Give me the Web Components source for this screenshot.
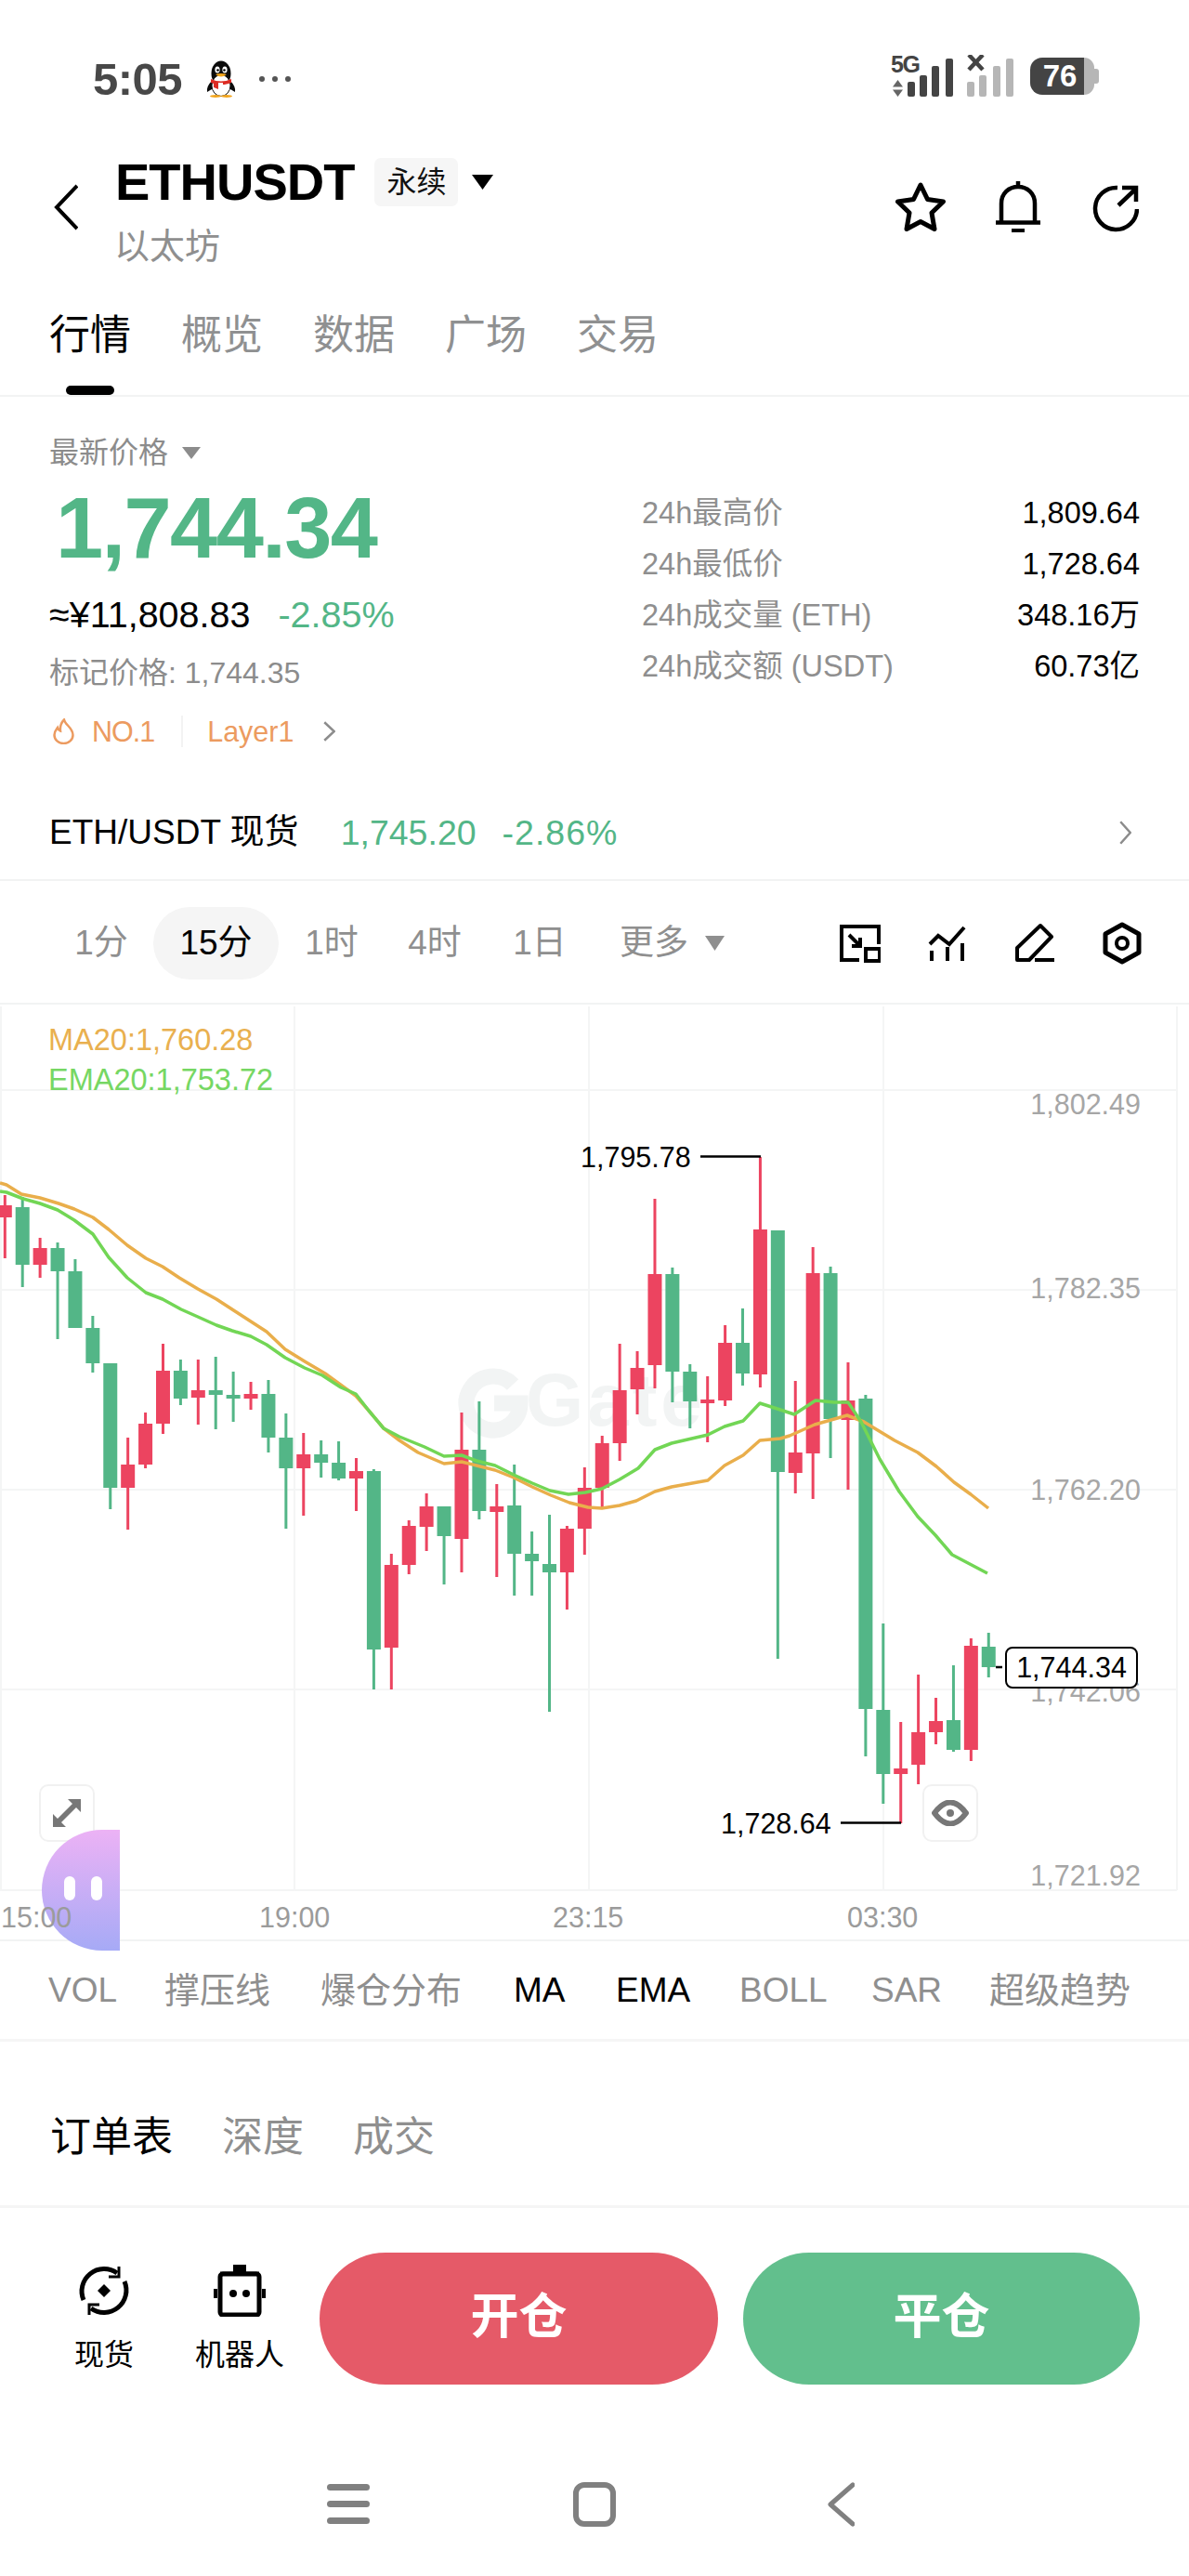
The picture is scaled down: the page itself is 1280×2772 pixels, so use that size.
<!DOCTYPE html>
<html lang="zh"><head><meta charset="utf-8"><title>ETHUSDT</title>
<style>
html,body{margin:0;background:#fff}
body{width:1280px;height:2772px;overflow:hidden;font-family:"Liberation Sans","Noto Sans CJK SC",sans-serif;color:#000}
x-tab{font-size:44px}
</style></head><body>
<x-status></x-status>
<x-header></x-header>
<x-tabs><x-tab active>行情</x-tab><x-tab>概览</x-tab><x-tab>数据</x-tab><x-tab>广场</x-tab><x-tab>交易</x-tab></x-tabs>
<x-ticker>
<x-stat><span slot="label">24h最高价</span>1,809.64</x-stat>
<x-stat><span slot="label">24h最低价</span>1,728.64</x-stat>
<x-stat><span slot="label">24h成交量 (ETH)</span>348.16万</x-stat>
<x-stat><span slot="label">24h成交额 (USDT)</span>60.73亿</x-stat>
</x-ticker>
<x-spot></x-spot>
<x-timebar></x-timebar>
<x-chart></x-chart>
<x-indicators></x-indicators>
<x-orders></x-orders>
<x-actions></x-actions>
<x-nav></x-nav>
<script>
const def=(name,css,html,init)=>customElements.define(name,class extends HTMLElement{
  constructor(){super();const r=this.attachShadow({mode:'open'});r.innerHTML=`<style>${css}</style>${html}`;if(init)init(r,this)}
});
const chev=(w,h,c,sw)=>`<svg width="${w}" height="${h}" viewBox="0 0 ${w} ${h}" fill="none" stroke="${c}" stroke-width="${sw}"><path d="M${sw/2} ${sw/2}L${w-sw/2} ${h/2}L${sw/2} ${h-sw/2}"/></svg>`;
const tri=(w,h,c)=>`<svg width="${w}" height="${h}" viewBox="0 0 ${w} ${h}"><path d="M0 0H${w}L${w/2} ${h}Z" fill="${c}"/></svg>`;

def('x-status',`
:host{display:flex;height:170px;align-items:center;padding:0 97px 0 100px;box-sizing:border-box;width:1280px;color:#444}
.t{font-size:49px;font-weight:700;letter-spacing:-.5px;line-height:60px;color:#484848}
.q{margin-left:26px}
.d{margin-left:25px;display:flex;gap:8px}.d i{width:6px;height:6px;border-radius:50%;background:#555}
.r{margin-left:auto;display:flex;align-items:flex-start;height:50px}
.g{width:36px;height:46px;position:relative;margin-top:-3px}
.g b{display:block;font:700 25px/24px "Liberation Sans",sans-serif;color:#444;letter-spacing:-1.500px;margin-left:3px}
.g svg{display:block;margin:5px 0 0 5px}
.bat{margin-left:17px;display:flex;align-items:center;height:40px;margin-top:2px;position:relative}
.bat .a{width:58px;height:40px;background:#444;border-radius:13px 0 0 13px;color:#fff;font:700 33px/40px "Liberation Sans",sans-serif;text-align:center;padding-left:6px;box-sizing:border-box}
.bat .b{width:11px;height:40px;background:#b6b6b6;border-radius:0 12px 12px 0}
.bat .n{width:5px;height:16px;background:#b6b6b6;border-radius:0 3px 3px 0}
`,`<span class="t">5:05</span>
<svg class="q" width="32" height="40" viewBox="0 0 32 40"><ellipse cx="16" cy="14" rx="10.500" ry="13.500" fill="#0b0b0b"/><path d="M6 22Q0 28 1 34L6 31ZM26 22Q32 28 31 34L26 31Z" fill="#0b0b0b"/><ellipse cx="16" cy="27" rx="10" ry="11.500" fill="#fff" stroke="#111" stroke-width="1"/><path d="M5 20Q16 25 27 20L27 24Q21 26 18 26V24H13V31L8 29V25L5 24Z" fill="#dc2b23"/><ellipse cx="12" cy="10" rx="2.600" ry="3.600" fill="#fff"/><ellipse cx="20" cy="10" rx="2.600" ry="3.600" fill="#fff"/><circle cx="12.500" cy="10.500" r="1.300" fill="#000"/><circle cx="19.500" cy="10.500" r="1.300" fill="#000"/><path d="M10 15Q16 13 22 15Q16 20 10 15Z" fill="#f2a51d"/><ellipse cx="10" cy="38.500" rx="6" ry="1.500" fill="#f2a51d"/><ellipse cx="22" cy="38.500" rx="6" ry="1.500" fill="#f2a51d"/></svg>
<span class="d"><i></i><i></i><i></i></span>
<div class="r">
 <div class="g"><b>5G</b><svg width="11" height="18" viewBox="0 0 11 18"><path d="M5.500 0L11 7.500H0ZM5.500 18L0 10.500H11Z" fill="#666"/></svg></div>
 <svg width="118" height="46" viewBox="0 0 118 46" style="margin-left:-18px;margin-top:-1px"><g fill="#444"><rect x="3" y="29" width="8" height="16" rx="2"/><rect x="16" y="22" width="8" height="23" rx="2"/><rect x="29" y="12" width="8" height="33" rx="2"/><rect x="44" y="4" width="8" height="41" rx="2"/></g><g fill="#b6b6b6"><rect x="67" y="29" width="8" height="16" rx="2"/><rect x="80" y="22" width="8" height="23" rx="2"/><rect x="95" y="12" width="8" height="33" rx="2"/><rect x="109" y="4" width="8" height="41" rx="2"/></g><path d="M69 0L84 16M84 0L69 16" stroke="#444" stroke-width="4.500"/></svg>
 <div class="bat"><div class="a">76</div><div class="b"></div><div class="n"></div></div>
</div>`);

def('x-header',`
:host{display:flex;height:130px;width:1280px;box-sizing:border-box;padding-left:58px;align-items:flex-start}
.back{margin-top:28px}
.c{margin-left:40px}
.top{display:flex;align-items:center;height:52px}
.n{font-size:56px;font-weight:700;letter-spacing:-1px;line-height:52px}
.tag{margin-left:22px;width:90px;height:52px;background:#f6f6f6;border-radius:7px;font-size:32px;line-height:52px;text-align:center;color:#111}
.tr{margin-left:15px;display:flex}
.s{font-size:38px;line-height:50px;color:#8f8f8f;margin:18px 0 0 -1px}
.ic{margin-left:auto;margin-right:54px;display:flex;gap:54px;margin-top:25px}
`,`<svg class="back" width="26" height="50" viewBox="0 0 26 50" fill="none" stroke="#000" stroke-width="4"><path d="M25 2L3 25L25 48"/></svg>
<div class="c"><div class="top"><span class="n">ETHUSDT</span><span class="tag">永续</span><span class="tr">${tri(23,16,'#000')}</span></div><div class="s">以太坊</div></div>
<div class="ic">
<svg width="54" height="56" viewBox="0 0 54 56" fill="none" stroke="#000" stroke-width="5" stroke-linejoin="round"><path d="M27 4L34.500 19.500L51.500 22L39 34L42 51.500L27 43.500L12 51.500L15 34L2.500 22L19.500 19.500Z"/></svg>
<svg width="48" height="56" viewBox="0 0 48 56" fill="none" stroke="#000" stroke-width="4.500"><path d="M24 0V6M6 43V24C6 13 14 6 24 6S42 13 42 24V43M0 44.500H48" /><path d="M17 53H31" stroke-width="4"/></svg>
<svg width="50" height="56" viewBox="0 0 50 56" fill="none" stroke="#000" stroke-width="4.500" style="margin-left:2px"><path d="M27 7A22.500 22.500 0 1 0 48 30"/><path d="M28 26L47 8M32 7H47V22"/></svg>
</div>`);

def('x-tabs',`:host{display:flex;height:127px;width:1280px;box-sizing:border-box;padding:31px 0 0 53px;gap:54px;border-bottom:2px solid #f2f3f3}`,`<slot></slot>`);
def('x-tab',`
:host{display:block;position:relative;width:88px;height:60px;line-height:60px;color:#8f9091;white-space:nowrap}
:host([active]){color:#000}
:host([active])::after{content:"";position:absolute;left:18px;top:84px;width:52px;height:10px;border-radius:5px;background:#000}
`,`<slot></slot>`);

def('x-ticker',`
:host{display:flex;height:411px;width:1280px;box-sizing:border-box;padding:40px 53px 0}
.l{width:638px}
.rw{display:flex;align-items:center;white-space:nowrap}
.a{height:40px;font-size:32px;line-height:40px;color:#8c8c8c}
.a svg{margin-left:15px}
.b{height:121px;font-size:92px;font-weight:700;letter-spacing:-1.600px;color:#53b687;padding-left:7px;line-height:100px}
.c{height:65px;font-size:39.500px;line-height:50px}
.c em{font-style:normal;color:#53b687;margin-left:30px}
.d{height:62px;font-size:32px;line-height:40px;color:#8c8c8c}
.e{height:64px;font-size:30.500px;line-height:40px;color:#ec9b60}
.e .sep{width:2px;height:34px;background:#f3f3f3;margin:0 26px 0 29px}
.e .no{letter-spacing:-1px}
.e .ch{margin-left:32px;display:flex}
.e .fl{margin:0 19px 0 4px;display:flex}
.r{padding-top:57px;width:536px}
`,`<div class="l">
<div class="rw a">最新价格${tri(20,13,'#8c8c8c')}</div>
<div class="rw b">1,744.34</div>
<div class="rw c">≈¥11,808.83<em>-2.85%</em></div>
<div class="rw d">标记价格: 1,744.35</div>
<div class="rw e"><span class="fl"><svg width="23" height="28" viewBox="0 0 23 28" fill="none" stroke="#ec9b60" stroke-width="2.500"><path d="M12 1.500C13 7 21.500 10 21.500 18A10 9 0 0 1 1.500 18C1.500 14 3.500 12 5 10C5.500 12 6.500 13 8 13.500C7.500 9 9 4.500 12 1.500Z"/></svg></span><span class="no">NO.1</span><span class="sep"></span>Layer1<span class="ch">${chev(13,22,'#8c8c8c',2.5)}</span></div>
</div><div class="r"><slot></slot></div>`);

def('x-stat',`
:host{display:flex;justify-content:space-between;align-items:center;height:55px;font-size:32.500px;line-height:44px;color:#000;white-space:nowrap}
.l{color:#8f8f8f}
`,`<span class="l"><slot name="label"></slot></span><span><slot></slot></span>`);

def('x-spot',`
:host{display:flex;align-items:center;height:110px;width:1280px;box-sizing:border-box;padding:7px 62px 0 53px;border-bottom:2px solid #f2f3f3;font-size:37px;line-height:50px;white-space:nowrap}
.p{color:#53b687;margin-left:45px;font-size:37.500px}.q{margin-left:28px;letter-spacing:1px}
.ch{margin-left:auto;display:flex}
`,`<span>ETH/USDT 现货</span><span class="p">1,745.20</span><span class="p q">-2.86%</span><span class="ch">${chev(13,26,'#8c8c8c',2.5)}</span>`);

def('x-timebar',`
:host{display:flex;align-items:center;height:133px;width:1280px;box-sizing:border-box;padding:2px 50px 0 53px;border-bottom:2px solid #f2f3f3;font-size:37px;color:#8f8f8f;white-space:nowrap}
.i{text-align:center;line-height:78px;height:78px}
.on{width:135px;background:#f5f5f5;border-radius:39px;color:#000}
.more{margin-left:27px;display:flex;align-items:center;line-height:78px}.more svg{margin-left:18px}
.ic{margin-left:auto;display:flex;gap:50px;align-items:center}
`,`<div class="i" style="width:112px">1分</div><div class="i on">15分</div><div class="i" style="width:114px">1时</div><div class="i" style="width:108px">4时</div><div class="i" style="width:118px">1日</div>
<div class="more">更多${tri(21,16,'#8f8f8f')}</div>
<div class="ic">
<svg width="44" height="44" viewBox="0 0 44 44" fill="none" stroke="#000" stroke-width="4"><path d="M21 40H2V4H42V23"/><rect x="28" y="28" width="15" height="13" /><path d="M10 13L22 25M22 16V25H13" stroke-width="4"/></svg>
<svg width="44" height="44" viewBox="0 0 44 44" fill="none" stroke="#000" stroke-width="4"><path d="M3 23L12 14L24 23L40 5M5 30V41M22 26V41M38 22V41"/></svg>
<svg width="44" height="44" viewBox="0 0 44 44" fill="none" stroke="#000" stroke-width="4" stroke-linejoin="round"><path d="M3 38V27L28 3L40 15L16 40H3ZM22 40H43"/></svg>
<svg width="44" height="46" viewBox="0 0 44 46" fill="none" stroke="#000" stroke-width="5" stroke-linejoin="round"><path d="M22 3L40 13V33L22 43L4 33V13Z"/><circle cx="22" cy="23" r="6" stroke-width="4"/></svg>
</div>`);

/* candles: [colour, wickTop, wickBottom, bodyTop, bodyBottom] */
const C=[['r',1286,1354,1297,1310],['g',1288,1385,1299,1361],['r',1332,1375,1343,1361],['g',1337,1441,1343,1368],['g',1355,1429,1368,1429],['g',1416,1477,1429,1467],['g',1467,1624,1467,1601],['r',1547,1646,1576,1601],['r',1520,1580,1532,1576],['r',1446,1543,1475,1532],['g',1463,1512,1475,1505],['r',1463,1533,1496,1504],['g',1460,1538,1496,1501],['g',1476,1530,1501,1505],['r',1487,1517,1500,1505],['g',1485,1563,1500,1547],['g',1521,1645,1547,1580],['r',1542,1631,1565,1580],['g',1550,1590,1565,1574],['g',1551,1593,1574,1591],['r',1569,1626,1583,1591],['g',1581,1818,1583,1775],['r',1672,1818,1684,1773],['r',1636,1694,1642,1684],['r',1607,1669,1621,1643],['g',1621,1705,1621,1653],['r',1520,1692,1560,1656],['g',1508,1635,1560,1626],['r',1597,1697,1621,1627],['g',1576,1717,1620,1672],['g',1648,1717,1672,1680],['g',1630,1842,1683,1692],['r',1642,1732,1645,1692],['r',1579,1673,1601,1645],['r',1545,1622,1553,1601],['r',1446,1572,1496,1553],['r',1454,1522,1472,1495],['r',1290,1494,1371,1469],['g',1364,1509,1371,1476],['g',1468,1537,1476,1508],['r',1481,1552,1506,1510],['r',1426,1513,1445,1507],['g',1408,1491,1445,1478],['r',1245,1493,1323,1479],['g',1324,1785,1324,1584],['r',1486,1607,1563,1585],['r',1342,1613,1370,1564],['g',1363,1569,1370,1527],['r',1466,1603,1507,1528],['g',1501,1890,1505,1839],['g',1747,1941,1840,1909],['r',1853,1962,1903,1909],['r',1802,1920,1864,1899],['r',1827,1877,1852,1864],['g',1792,1885,1851,1883],['r',1763,1895,1771,1883],['g',1757,1805,1772,1794]];
const MA="0,1273 7,1275 23,1285 43,1289 63,1295 80,1301 100,1310 117,1323 137,1340 157,1354 175,1363 193,1375 213,1387 233,1398 253,1411 270,1422 287,1433 307,1452 328,1465 350,1478 383,1502 397,1518 413,1537 430,1550 450,1563 478,1575 497,1573 513,1577 533,1582 553,1590 573,1600 593,1609 613,1617 633,1622 648,1623 667,1620 685,1615 705,1605 723,1600 762,1593 780,1577 800,1566 818,1550 840,1548 850,1545 877,1533 912,1523 930,1530 963,1550 988,1563 1008,1578 1027,1595 1045,1608 1064,1623";
const EMA="0,1282 7,1283 25,1290 43,1295 62,1302 80,1313 100,1328 117,1353 137,1375 157,1391 175,1398 195,1409 213,1417 233,1426 250,1432 270,1438 287,1447 307,1461 328,1472 347,1480 367,1493 383,1500 397,1518 413,1537 430,1546 457,1557 478,1567 497,1566 513,1572 533,1577 553,1587 573,1596 592,1604 612,1608 630,1606 648,1602 667,1592 687,1580 705,1560 723,1553 762,1544 780,1535 800,1529 818,1510 840,1517 855,1522 878,1507 898,1509 913,1509 927,1530 947,1570 968,1605 988,1632 1007,1652 1025,1673 1063,1693";

def('x-chart',`
:host{display:block;position:relative;width:1280px;height:1008px;border-bottom:2px solid #f2f3f3;box-sizing:border-box}
svg.main{position:absolute;left:0;top:0;display:block}
.t{position:absolute;white-space:nowrap;line-height:36px;height:36px;font-size:30.500px}
.wm{position:absolute;left:566px;top:380px;font-size:80px;font-weight:700;line-height:92px;color:#f2f4f4;letter-spacing:4px}
.btn{position:absolute;width:60px;height:62px;box-sizing:border-box;border:2px solid #f1f1f1;border-radius:10px;background:#fff;display:flex;align-items:center;justify-content:center}
.tag{position:absolute;left:1082px;top:691px;width:143px;height:45px;box-sizing:border-box;border:2px solid #000;border-radius:8px;background:#fff;font-size:30.500px;line-height:41px;text-align:center}
.blob{position:absolute;left:45px;top:888px;width:84px;height:130px;border-radius:65px 0 0 65px/65px 0 0 65px;background:linear-gradient(180deg,#ecb2f5,#a6aaf6)}
.blob i{position:absolute;top:50px;width:12px;height:26px;border-radius:6px;background:#fff}
.host{display:contents}
`,`<span class="wm">Gate</span><div class="host"></div>`,(r)=>{
  const h=r.querySelector('.host');
  let s='';
  const grid='#f4f5f5';
  for(const y of [1173,1388,1603,1818]) s+=`<rect x="0" y="${y-1}" width="1267" height="2" fill="${grid}"/>`;
  for(const x of [0,316,633,950,1266]) s+=`<rect x="${x}" y="1083" width="2" height="951" fill="${grid}"/>`;
  s+=`<rect x="0" y="2033" width="1267" height="2" fill="${grid}"/>`;
  s+=`<path d="M552 1490A29 29 0 1 0 560 1510H532" fill="none" stroke="#f2f4f4" stroke-width="17"/>`;
  C.forEach((c,i)=>{const cx=5.3+18.91*i,col=c[0]=='r'?'#ec4460':'#53b687';
    s+=`<rect x="${cx-1.5}" y="${c[1]}" width="3" height="${c[2]-c[1]}" fill="${col}"/>`;
    s+=`<rect x="${cx-7.5}" y="${c[3]}" width="15" height="${c[4]-c[3]}" fill="${col}"/>`;});
  s+=`<polyline points="${MA}" fill="none" stroke="#e9ae4b" stroke-width="3.500" stroke-linejoin="round"/>`;
  s+=`<polyline points="${EMA}" fill="none" stroke="#72d655" stroke-width="3.500" stroke-linejoin="round"/>`;
  s+=`<path d="M754 1244.500H819M905 1961.500H970M1072 1794H1079" stroke="#000" stroke-width="2.500" fill="none"/>`;
  let html=`<svg class="main" width="1280" height="1008" viewBox="0 1081 1280 1008">${s}</svg>`;
  const T=1081;
  const lab=(t,cy,css)=>`<span class="t" style="top:${cy-18-T}px;${css}">${t}</span>`;
  html+=lab('MA20:1,760.28',1119,'left:52px;color:#e9b04f;font-size:32.500px');
  html+=lab('EMA20:1,753.72',1162,'left:52px;color:#76d763;font-size:32.500px');
  [['1,802.49',1188],['1,782.35',1386],['1,762.20',1603],['1,742.06',1820],['1,721.92',2018]].forEach(a=>html+=lab(a[0],a[1],'right:52px;color:#a6a6a6'));
  html+=lab('1,795.78',1245,'left:625px;color:#000');
  html+=lab('1,728.64',1962,'left:776px;color:#000');
  html+=`<div class="tag">1,744.34</div>`;
  html+=`<div class="btn" style="left:42px;top:839px"><svg width="32" height="32" viewBox="0 0 32 32" fill="#777"><path d="M31 1V15L26 10L10 26L15 31H1V17L6 22L22 6L17 1Z"/></svg></div>`;
  html+=`<div class="btn" style="left:993px;top:839px"><svg width="40" height="28" viewBox="0 0 40 28" fill="none" stroke="#777" stroke-width="6" stroke-linejoin="round"><path d="M3 14Q20 -9 37 14Q20 37 3 14Z"/><circle cx="20" cy="14" r="4" fill="#777" stroke="none"/></svg></div>`;
  html+=`<div class="blob"><i style="left:24px"></i><i style="left:53px"></i></div>`;
  [['15:00',1],['19:00',279],['23:15',595],['03:30',912]].forEach(a=>html+=lab(a[0],2063,`left:${a[1]}px;color:#9b9b9b`));
  h.innerHTML=html;
});

def('x-indicators',`
:host{display:flex;align-items:center;height:105px;width:1280px;box-sizing:border-box;padding:0 0 0 52px;font-size:37px;line-height:46px;color:#8f8f8f;white-space:nowrap}
span{display:block}
.z{font-size:38px}.k{color:#000}
`,`<span style="width:125px">VOL</span><span class="z" style="width:168px">撑压线</span><span class="z" style="width:208px">爆仓分布</span><span class="k" style="width:110px">MA</span><span class="k" style="width:133px">EMA</span><span style="width:142px">BOLL</span><span style="width:127px">SAR</span><span class="z">超级趋势</span>`);

def('x-orders',`
:host{display:flex;height:182px;width:1280px;box-sizing:border-box;padding:73px 0 0 54px;gap:53px;font-size:44px;line-height:60px;color:#8f8f8f;border-top:3px solid #f5f5f5;border-bottom:3px solid #f5f5f5;white-space:nowrap}
.k{color:#000}
`,`<span class="k">订单表</span><span>深度</span><span>成交</span>`);

def('x-actions',`
:host{display:flex;height:224px;width:1280px;box-sizing:border-box;padding:48px 53px 0 0;white-space:nowrap}
.col{display:flex;flex-direction:column;align-items:center;font-size:32px;line-height:40px}
.col svg{margin-top:13px;margin-bottom:21px}
.btn{height:142px;border-radius:71px;color:#fff;font-size:52px;font-weight:700;line-height:138px;text-align:center}
`,`<div class="col" style="width:146px;margin-left:39px">
<svg width="56" height="56" viewBox="0 0 56 56" fill="none" stroke="#000" stroke-width="5"><path d="M6 38A24 24 0 0 1 42 9"/><path d="M50 18A24 24 0 0 1 14 47"/><path d="M44 2V13H33M12 54V43H23" stroke-width="3"/><path d="M28 21L35 28L28 35L21 28Z" fill="#000" stroke="none"/></svg>现货</div>
<div class="col" style="width:146px">
<svg width="56" height="56" viewBox="0 0 56 56" fill="none" stroke="#000" stroke-width="5"><rect x="21" y="0" width="14" height="8" fill="#000" stroke="none"/><rect x="7" y="10" width="42" height="44" rx="3"/><path d="M2 26V36M54 26V36" stroke-width="4"/><path d="M7 9H49" stroke-width="3"/><circle cx="21" cy="31" r="4" fill="#000" stroke="none"/><circle cx="35" cy="31" r="4" fill="#000" stroke="none"/></svg>机器人</div>
<div class="btn" style="width:429px;margin-left:13px;background:#e55a68">开仓</div>
<div class="btn" style="width:427px;margin-left:27px;background:#62bf8d">平仓</div>`);

def('x-nav',`
:host{display:flex;height:172px;width:1280px;box-sizing:border-box;padding:71px 0 0 352px;align-items:flex-start}
`,`<svg width="46" height="48" viewBox="0 0 46 48" fill="#808080"><rect y="2" width="46" height="7" rx="3.500"/><rect y="20" width="46" height="7" rx="3.500"/><rect y="38" width="46" height="7" rx="3.500"/></svg>
<svg width="46" height="48" viewBox="0 0 46 48" fill="none" stroke="#808080" stroke-width="6" style="margin-left:219px"><rect x="3" y="3" width="40" height="42" rx="9"/></svg>
<svg width="30" height="48" viewBox="0 0 30 48" fill="none" stroke="#808080" stroke-width="5" stroke-linecap="round" stroke-linejoin="round" style="margin-left:227px"><path d="M28 3L4 24L28 45"/></svg>`);
</script>
</body></html>
